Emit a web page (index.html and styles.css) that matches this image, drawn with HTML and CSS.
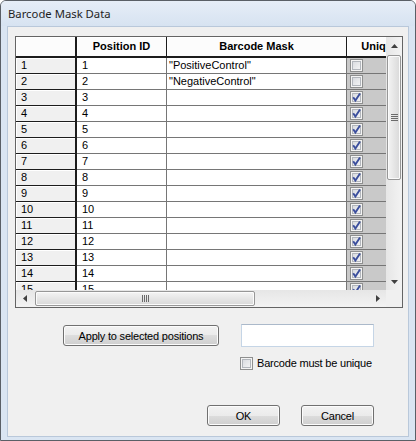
FILE: index.html
```html
<!DOCTYPE html>
<html>
<head>
<meta charset="utf-8">
<title>Barcode Mask Data</title>
<link rel="stylesheet" href="styles.css">
</head>
<body>
<div class="window">
  <div class="titlebar">Barcode Mask Data</div>
  <div class="client">
    <div class="grid">
      <div class="grid-body">
        <div class="row head">
          <div class="c rh"></div>
          <div class="c pid">Position ID</div>
          <div class="c mask">Barcode Mask</div>
          <div class="c uq">Unique</div>
        </div>
        <div class="row"><div class="c rh">1</div><div class="c pid">1</div><div class="c mask">"PositiveControl"</div><div class="c uq"><span class="cb"></span></div></div>
        <div class="row"><div class="c rh">2</div><div class="c pid">2</div><div class="c mask">"NegativeControl"</div><div class="c uq"><span class="cb"></span></div></div>
        <div class="row"><div class="c rh">3</div><div class="c pid">3</div><div class="c mask"></div><div class="c uq"><span class="cb"><svg width="13" height="13" viewBox="0 0 13 13"><path d="M3.2 6.2L5.4 9.6L10 2.6" fill="none" stroke="#3c4f9d" stroke-width="1.9"/></svg></span></div></div>
        <div class="row"><div class="c rh">4</div><div class="c pid">4</div><div class="c mask"></div><div class="c uq"><span class="cb"><svg width="13" height="13" viewBox="0 0 13 13"><path d="M3.2 6.2L5.4 9.6L10 2.6" fill="none" stroke="#3c4f9d" stroke-width="1.9"/></svg></span></div></div>
        <div class="row"><div class="c rh">5</div><div class="c pid">5</div><div class="c mask"></div><div class="c uq"><span class="cb"><svg width="13" height="13" viewBox="0 0 13 13"><path d="M3.2 6.2L5.4 9.6L10 2.6" fill="none" stroke="#3c4f9d" stroke-width="1.9"/></svg></span></div></div>
        <div class="row"><div class="c rh">6</div><div class="c pid">6</div><div class="c mask"></div><div class="c uq"><span class="cb"><svg width="13" height="13" viewBox="0 0 13 13"><path d="M3.2 6.2L5.4 9.6L10 2.6" fill="none" stroke="#3c4f9d" stroke-width="1.9"/></svg></span></div></div>
        <div class="row"><div class="c rh">7</div><div class="c pid">7</div><div class="c mask"></div><div class="c uq"><span class="cb"><svg width="13" height="13" viewBox="0 0 13 13"><path d="M3.2 6.2L5.4 9.6L10 2.6" fill="none" stroke="#3c4f9d" stroke-width="1.9"/></svg></span></div></div>
        <div class="row"><div class="c rh">8</div><div class="c pid">8</div><div class="c mask"></div><div class="c uq"><span class="cb"><svg width="13" height="13" viewBox="0 0 13 13"><path d="M3.2 6.2L5.4 9.6L10 2.6" fill="none" stroke="#3c4f9d" stroke-width="1.9"/></svg></span></div></div>
        <div class="row"><div class="c rh">9</div><div class="c pid">9</div><div class="c mask"></div><div class="c uq"><span class="cb"><svg width="13" height="13" viewBox="0 0 13 13"><path d="M3.2 6.2L5.4 9.6L10 2.6" fill="none" stroke="#3c4f9d" stroke-width="1.9"/></svg></span></div></div>
        <div class="row"><div class="c rh">10</div><div class="c pid">10</div><div class="c mask"></div><div class="c uq"><span class="cb"><svg width="13" height="13" viewBox="0 0 13 13"><path d="M3.2 6.2L5.4 9.6L10 2.6" fill="none" stroke="#3c4f9d" stroke-width="1.9"/></svg></span></div></div>
        <div class="row"><div class="c rh">11</div><div class="c pid">11</div><div class="c mask"></div><div class="c uq"><span class="cb"><svg width="13" height="13" viewBox="0 0 13 13"><path d="M3.2 6.2L5.4 9.6L10 2.6" fill="none" stroke="#3c4f9d" stroke-width="1.9"/></svg></span></div></div>
        <div class="row"><div class="c rh">12</div><div class="c pid">12</div><div class="c mask"></div><div class="c uq"><span class="cb"><svg width="13" height="13" viewBox="0 0 13 13"><path d="M3.2 6.2L5.4 9.6L10 2.6" fill="none" stroke="#3c4f9d" stroke-width="1.9"/></svg></span></div></div>
        <div class="row"><div class="c rh">13</div><div class="c pid">13</div><div class="c mask"></div><div class="c uq"><span class="cb"><svg width="13" height="13" viewBox="0 0 13 13"><path d="M3.2 6.2L5.4 9.6L10 2.6" fill="none" stroke="#3c4f9d" stroke-width="1.9"/></svg></span></div></div>
        <div class="row"><div class="c rh">14</div><div class="c pid">14</div><div class="c mask"></div><div class="c uq"><span class="cb"><svg width="13" height="13" viewBox="0 0 13 13"><path d="M3.2 6.2L5.4 9.6L10 2.6" fill="none" stroke="#3c4f9d" stroke-width="1.9"/></svg></span></div></div>
        <div class="row"><div class="c rh">15</div><div class="c pid">15</div><div class="c mask"></div><div class="c uq"><span class="cb"><svg width="13" height="13" viewBox="0 0 13 13"><path d="M3.2 6.2L5.4 9.6L10 2.6" fill="none" stroke="#3c4f9d" stroke-width="1.9"/></svg></span></div></div>
      </div>
      <div class="vscroll">
        <div class="sbtn"><svg width="7" height="4" viewBox="0 0 7 4"><path d="M0 4H7L3.5 0Z" fill="#3f3f3f"/></svg></div>
        <div class="vthumb"><svg width="7" height="7" viewBox="0 0 7 7"><path d="M0 .5H7M0 2.5H7M0 4.5H7M0 6.5H7" stroke="#6b6b6b" stroke-width="1"/></svg></div>
        <div class="spacer"></div>
        <div class="sbtn"><svg width="7" height="4" viewBox="0 0 7 4"><path d="M0 0H7L3.5 4Z" fill="#3f3f3f"/></svg></div>
      </div>
      <div class="hscroll">
        <div class="sbtn"><svg width="4" height="7" viewBox="0 0 4 7"><path d="M4 0V7L0 3.5Z" fill="#3f3f3f"/></svg></div>
        <div class="hthumb"><svg width="7" height="7" viewBox="0 0 7 7"><path d="M.5 0V7M2.5 0V7M4.5 0V7M6.5 0V7" stroke="#6b6b6b" stroke-width="1"/></svg></div>
        <div class="spacer"></div>
        <div class="sbtn"><svg width="4" height="7" viewBox="0 0 4 7"><path d="M0 0V7L4 3.5Z" fill="#3f3f3f"/></svg></div>
      </div>
      <div class="corner"></div>
    </div>

    <div class="actions">
      <button class="btn apply">Apply to selected positions</button>
      <div class="textbox"></div>
    </div>
    <div class="check-row">
      <span class="cb"></span>
      <span class="label">Barcode must be unique</span>
    </div>
    <div class="footer">
      <button class="btn small">OK</button>
      <button class="btn small">Cancel</button>
    </div>
  </div>
</div>
</body>
</html>
```

FILE: styles.css
```css
* { box-sizing: border-box; }
html, body { margin: 0; padding: 0; background: #ffffff; }
body {
  font-family: "Liberation Sans", Arial, sans-serif;
  font-size: 11px;
  color: #000;
}

.window {
  width: 416px;
  height: 441px;
  border: 1px solid #5a5f66;
  border-radius: 6px 6px 0 0;
  background: #dae5f2;
  display: flex;
  flex-direction: column;
  overflow: hidden;
}

.titlebar {
  flex: none;
  height: 25px;
  padding: 5px 0 0 7px;
  font-family: "Noto Sans", "DejaVu Sans", sans-serif;
  font-size: 11.3px;
  line-height: 16px;
  color: #1e1e1e;
  background: linear-gradient(#e6edf7, #d7e3f1);
}

.client {
  flex: 1;
  margin: 0 6px 3px 6px;
  border: 1px solid #b9c8da;
  background: #f0f0f0;
  padding: 9px 5px 0 7px;
}

/* ---------- grid ---------- */
.grid {
  width: 388px;
  display: grid;
  grid-template-columns: 370px 16px;
  grid-template-rows: 253px 17px;
  border: 1px solid #646464;
  background: #ffffff;
}

.grid-body {
  grid-column: 1;
  grid-row: 1;
  overflow: hidden;
  background: #ffffff;
}

.row {
  display: flex;
  height: 16px;
}

.c {
  flex: none;
  height: 100%;
  white-space: nowrap;
  overflow: hidden;
  line-height: 15px;
}

.rh { width: 61px; }
.pid { width: 90px; }
.mask { width: 180px; }
.uq { width: 66px; }

.row .rh {
  background: #f0f0f0;
  border-right: 2px solid #1c1c1c;
  border-bottom: 1px solid #1c1c1c;
  box-shadow: inset 1px 1px 0 #ffffff;
  padding-left: 5px;
}

.row .pid {
  border-right: 1px solid #767676;
  border-bottom: 1px solid #767676;
  padding-left: 5px;
}

.row .mask {
  border-right: 1px solid #767676;
  border-bottom: 1px solid #767676;
  padding-left: 2px;
}

.row .uq {
  background: #c9c9c9;
  border-bottom: 1px solid #767676;
  padding: 1px 0 0 3px;
}

.row.head { height: 21px; }

.row.head .c {
  background: #fcfcfc;
  border-bottom: 2px solid #1c1c1c;
  border-right: 1px solid #1c1c1c;
  box-shadow: inset 1px 1px 0 #ffffff;
  font-weight: bold;
  text-align: center;
  line-height: 19px;
  padding: 0;
}

.row.head .rh { border-right: 2px solid #1c1c1c; }
.row.head .uq { border-right: none; padding-right: 0; }

/* ---------- checkbox ---------- */
.cb {
  display: block;
  width: 13px;
  height: 13px;
  border: 1px solid #8e8f8f;
  background: linear-gradient(135deg, #d3d6db, #f9f9f9);
  box-shadow: inset 0 0 0 1px #f4f4f4, inset 0 0 0 2px #b2b6bc;
}

.cb svg {
  display: block;
  margin: -1px;
}

/* ---------- scrollbars ---------- */
.vscroll {
  grid-column: 2;
  grid-row: 1;
  display: flex;
  flex-direction: column;
  background: linear-gradient(90deg, #e6e6e6, #f3f3f3);
}

.hscroll {
  grid-column: 1;
  grid-row: 2;
  display: flex;
  background: linear-gradient(#e6e6e6, #f3f3f3);
}

.sbtn {
  flex: none;
  display: flex;
  align-items: center;
  justify-content: center;
}

.vscroll .sbtn { height: 17px; }
.hscroll .sbtn { width: 17px; }

.spacer { flex: 1; }

.vthumb {
  flex: none;
  height: 125px;
  margin: 1px 1px 0 1px;
  border: 1px solid #979797;
  border-radius: 2px;
  background: linear-gradient(90deg, #f4f4f4, #e6e6e6 50%, #d9d9d9);
  box-shadow: inset 0 0 0 1px #fbfbfb;
  display: flex;
  align-items: center;
  justify-content: center;
}

.hthumb {
  flex: none;
  width: 220px;
  margin: 1px 0 1px 2px;
  border: 1px solid #979797;
  border-radius: 2px;
  background: linear-gradient(#f4f4f4, #e6e6e6 50%, #d9d9d9);
  box-shadow: inset 0 0 0 1px #fbfbfb;
  display: flex;
  align-items: center;
  justify-content: center;
}

.corner {
  grid-column: 2;
  grid-row: 2;
  background: #f0f0f0;
}

/* ---------- controls ---------- */
.btn {
  height: 21px;
  padding: 0;
  margin: 0;
  border: 1px solid #707070;
  border-radius: 3px;
  background: linear-gradient(#f2f2f2 0%, #ebebeb 50%, #dddddd 50%, #cfcfcf 100%);
  box-shadow: inset 0 0 0 1px #fcfcfc;
  font-family: "Liberation Sans", Arial, sans-serif;
  font-size: 11px;
  letter-spacing: -0.2px;
  color: #000;
  display: flex;
  align-items: center;
  justify-content: center;
}

.actions {
  display: flex;
  align-items: center;
  margin-top: 16px;
  padding-left: 48px;
  height: 23px;
}

.apply { width: 156px; }

.textbox {
  width: 133px;
  height: 23px;
  margin-left: 22px;
  border: 1px solid #c5d5e6;
  border-top-color: #abb9ca;
  background: #ffffff;
}

.check-row {
  display: flex;
  align-items: center;
  height: 13px;
  margin-top: 10px;
  padding-left: 225px;
}

.label {
  margin-left: 4px;
  letter-spacing: -0.2px;
  line-height: 13px;
}

.footer {
  display: flex;
  gap: 21px;
  margin-top: 35px;
  padding-left: 192px;
}

.small { width: 73px; }
```
